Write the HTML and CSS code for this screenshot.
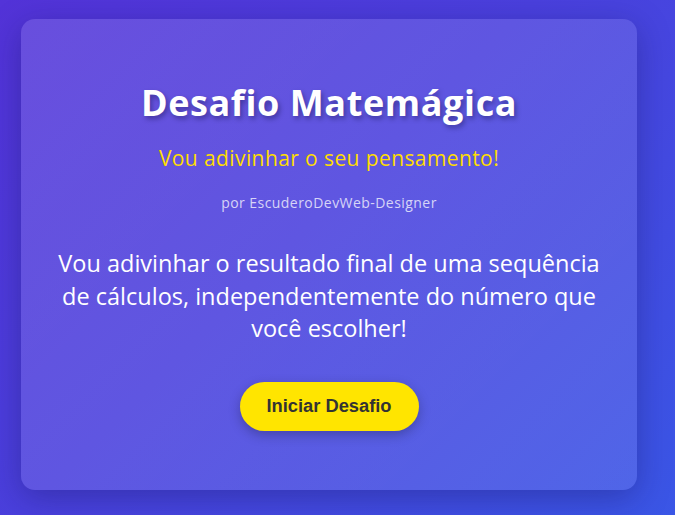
FILE: index.html
```html
<!DOCTYPE html>
<html lang="pt-BR">
<head>
<meta charset="utf-8">
<title>Desafio Matemágica</title>
<link rel="stylesheet" href="styles.css">
</head>
<body>
<main class="card">
  <h1 class="title">Desafio Matemágica</h1>
  <p class="subtitle">Vou adivinhar o seu pensamento!</p>
  <p class="credit">por EscuderoDevWeb-Designer</p>
  <p class="intro">Vou adivinhar o resultado final de uma sequência de cálculos, independentemente do número que você escolher!</p>
  <button class="start" type="button">Iniciar Desafio</button>
</main>
</body>
</html>
```

FILE: styles.css
```css
* { box-sizing: border-box; }
html, body { height: 100%; }
body {
  margin: 0;
  padding: 19px 38px 25px 21px;
  background: linear-gradient(135deg, #5333d8 0%, #4a40dd 45%, #3a56e6 100%);
  font-family: "Open Sans", "Noto Sans", sans-serif;
  color: #fff;
}
.card {
  width: 616px;
  height: 471px;
  border-radius: 14px;
  background: linear-gradient(135deg, rgba(255,255,255,0.13), rgba(255,255,255,0.10));
  box-shadow: 0 8px 32px rgba(20, 20, 90, 0.35);
  display: flex;
  flex-direction: column;
  align-items: center;
  text-align: center;
  padding: 61px 30px 0;
}
.title {
  margin: 0;
  font-size: 36px;
  font-weight: 700;
  line-height: 46px;
  letter-spacing: 0.6px;
  text-shadow: 2px 3px 5px rgba(0, 0, 40, 0.35);
}
.subtitle {
  margin: 18px 0 0;
  font-size: 21px;
  line-height: 28px;
  letter-spacing: 0.4px;
  color: #ffdd00;
}
.credit {
  margin: 21px 0 0;
  font-size: 14px;
  line-height: 20px;
  letter-spacing: 0.45px;
  color: rgba(255,255,255,0.75);
}
.intro {
  margin: 34px 0 0;
  font-size: 23.5px;
  line-height: 32.5px;
}
.start {
  margin-top: 37px;
  width: 179px;
  height: 49px;
  border: 0;
  border-radius: 25px;
  background: #ffe500;
  color: #333;
  font-family: "Liberation Sans", Arial, sans-serif;
  font-weight: 700;
  font-size: 18.3px;
  box-shadow: 0 4px 12px rgba(0,0,0,0.25);
}
```
